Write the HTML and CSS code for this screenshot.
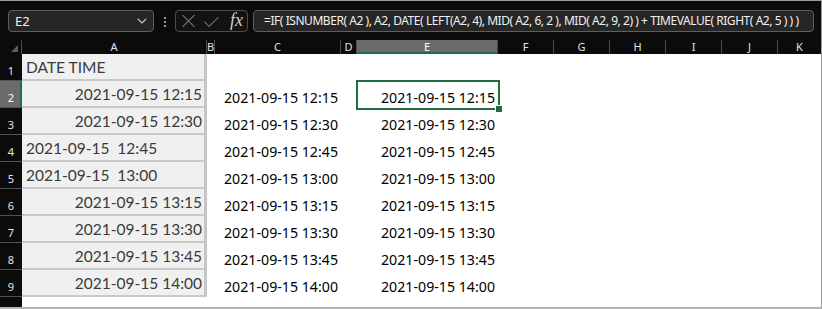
FILE: index.html
```html
<!DOCTYPE html>
<html>
	<head>
		<meta charset="UTF-8">
		<title>Sheet</title>
		<link rel="stylesheet" href="styles.css">
	</head>
	<body>
		<div class="app">
			<!--编辑栏-->
			<div class="bar">
				<div class="namebox">
					<span>E2</span>
					<svg width="10" height="6" viewBox="0 0 10 6"><path d="M0.8 0.8 L5 5 L9.2 0.8" fill="none" stroke="#d0d0d0" stroke-width="1.2"/></svg>
				</div>
				<div class="grip"><i></i><i></i><i></i></div>
				<div class="fxbox">
					<svg width="13" height="12" viewBox="0 0 13 12"><path d="M0.5 0 L12.5 12 M12.5 0 L0.5 12" fill="none" stroke="#6e6e6e" stroke-width="1.1"/></svg>
					<svg class="ok" width="15" height="10" viewBox="0 0 15 10"><path d="M0.4 4.6 L5 9.4 L14.6 0.2" fill="none" stroke="#6e6e6e" stroke-width="1.1"/></svg>
					<span class="fx">fx</span>
				</div>
				<div class="formula">=IF( ISNUMBER( A2 ), A2, DATE( LEFT(A2, 4), MID( A2, 6, 2 ), MID( A2, 9, 2) ) + TIMEVALUE( RIGHT( A2, 5 ) ) )</div>
			</div>
			<!--表格区-->
			<div class="sheet">
				<div class="row head">
					<div class="ch corner"><span class="tri"></span></div>
					<div class="ch">A</div>
					<div class="ch">B</div>
					<div class="ch">C</div>
					<div class="ch">D</div>
					<div class="ch sel">E</div>
					<div class="ch">F</div>
					<div class="ch">G</div>
					<div class="ch">H</div>
					<div class="ch">I</div>
					<div class="ch">J</div>
					<div class="ch">K</div>
				</div>
				<div class="row">
					<div class="rh">1</div>
					<div class="a l">DATE TIME</div>
					<div></div><div class="n"></div><div></div><div class="n"></div><div></div>
				</div>
				<div class="row">
					<div class="rh sel">2</div>
					<div class="a">2021-09-15 12:15</div>
					<div></div><div class="n">2021-09-15 12:15</div><div></div><div class="n cur">2021-09-15 12:15</div><div></div>
				</div>
				<div class="row">
					<div class="rh">3</div>
					<div class="a">2021-09-15 12:30</div>
					<div></div><div class="n">2021-09-15 12:30</div><div></div><div class="n">2021-09-15 12:30</div><div></div>
				</div>
				<div class="row">
					<div class="rh">4</div>
					<div class="a l">2021-09-15  12:45</div>
					<div></div><div class="n">2021-09-15 12:45</div><div></div><div class="n">2021-09-15 12:45</div><div></div>
				</div>
				<div class="row">
					<div class="rh">5</div>
					<div class="a l">2021-09-15  13:00</div>
					<div></div><div class="n">2021-09-15 13:00</div><div></div><div class="n">2021-09-15 13:00</div><div></div>
				</div>
				<div class="row">
					<div class="rh">6</div>
					<div class="a">2021-09-15 13:15</div>
					<div></div><div class="n">2021-09-15 13:15</div><div></div><div class="n">2021-09-15 13:15</div><div></div>
				</div>
				<div class="row">
					<div class="rh">7</div>
					<div class="a">2021-09-15 13:30</div>
					<div></div><div class="n">2021-09-15 13:30</div><div></div><div class="n">2021-09-15 13:30</div><div></div>
				</div>
				<div class="row">
					<div class="rh">8</div>
					<div class="a">2021-09-15 13:45</div>
					<div></div><div class="n">2021-09-15 13:45</div><div></div><div class="n">2021-09-15 13:45</div><div></div>
				</div>
				<div class="row">
					<div class="rh">9</div>
					<div class="a">2021-09-15 14:00</div>
					<div></div><div class="n">2021-09-15 14:00</div><div></div><div class="n">2021-09-15 14:00</div><div></div>
				</div>
				<div class="row">
					<div class="rh">10</div>
				</div>
			</div>
		</div>
	</body>
</html>
```

FILE: styles.css
```css
*{
	margin: 0;
	padding: 0;
	box-sizing: border-box;
}
body{
	width: 822px;
	height: 309px;
	overflow: hidden;
	background: #fff;
}
.app{
	width: 822px;
	height: 309px;
	border-top: 1px solid #9c9c9c;
	border-right: 1px solid #9c9c9c;
	border-bottom: 2px solid #b4b4b4;
	display: flex;
	flex-direction: column;
	overflow: hidden;
}
/* 编辑栏 */
.bar{
	height: 39px;
	flex-shrink: 0;
	background: #0b0b0b;
	display: flex;
	align-items: flex-start;
	padding: 9px 0 0 8px;
}
.namebox{
	width: 146px;
	height: 22px;
	border: 1px solid #5e5e5e;
	border-radius: 4px;
	background: #262626;
	display: flex;
	align-items: center;
	justify-content: space-between;
	padding: 0 6px 0 6px;
	font: 13px "Noto Sans", sans-serif;
	color: #f4f4f4;
}
.grip{
	margin-left: 10px;
	width: 2px;
	display: flex;
	flex-direction: column;
	gap: 2px;
	padding-top: 7px;
}
.grip i{
	display: block;
	width: 2px;
	height: 2px;
	background: #9a9a9a;
}
.fxbox{
	margin-left: 9px;
	width: 73px;
	height: 22px;
	border: 1px solid #4c4c4c;
	border-radius: 4px;
	background: #121212;
	display: flex;
	align-items: center;
	padding-left: 6px;
}
.fxbox .ok{
	margin-left: 9px;
	margin-top: 1px;
}
.fx{
	margin-left: 11px;
	font: italic 18px "Liberation Serif", serif;
	color: #cfcfcf;
	line-height: 18px;
	margin-top: -2px;
}
.formula{
	margin-left: 5px;
	width: 561px;
	height: 22px;
	border: 1px solid #5e5e5e;
	border-radius: 4px;
	background: #262626;
	padding-left: 10px;
	font: 12px "Noto Sans", sans-serif;
	letter-spacing: -0.45px;
	line-height: 20px;
	color: #f0f0f0;
	white-space: nowrap;
	overflow: hidden;
}
/* 表格 */
.sheet{
	flex: 1;
	overflow: hidden;
}
.row{
	display: grid;
	grid-template-columns: 22px 185px 8px 126px 16px 141px 1fr;
	height: 27px;
}
.row.head{
	height: 14px;
	grid-template-columns: 22px 185px 8px 126px 16px 141px 56px 56px 56px 56px 56px 1fr;
	background: #0b0b0b;
}
.ch{
	border-right: 1px solid #4a4a4a;
	color: #e2e2e2;
	font: 11px "Noto Sans", sans-serif;
	line-height: 14px;
	text-align: center;
}
.ch:last-child{
	border-right: none;
}
.ch.sel{
	background: #6b6b6b;
	box-shadow: inset 0 -2px 0 #1e7145;
	color: #fff;
}
.corner{
	display: flex;
	justify-content: flex-end;
	align-items: flex-end;
	padding: 0 3px 2px 0;
}
.tri{
	width: 7px;
	height: 7px;
	background: #5c5c5c;
	clip-path: polygon(100% 0, 100% 100%, 0 100%);
}
.rh{
	background: #0b0b0b;
	border-bottom: 1px solid #525252;
	color: #e6e6e6;
	font: 11px "Noto Sans", sans-serif;
	line-height: 1;
	display: flex;
	align-items: flex-end;
	justify-content: center;
	padding-bottom: 4px;
}
.rh.sel{
	background: #6b6b6b;
	box-shadow: inset -2px 0 0 #1e7145;
	color: #fff;
}
.a{
	background: #f0f0f0;
	border-right: 3px solid #c6c6c6;
	border-bottom: 2px solid #c9c9c9;
	font: 15.5px Lato, sans-serif;
	line-height: 1;
	color: #3a3a3a;
	white-space: pre;
	display: flex;
	align-items: flex-end;
	justify-content: flex-end;
	padding: 0 2px 4px 4px;
}
.a.l{
	justify-content: flex-start;
}
.n{
	font: 14.2px "Noto Sans", sans-serif;
	line-height: 1;
	color: #000;
	display: flex;
	align-items: flex-end;
	justify-content: flex-end;
	padding: 0 3px 3px 0;
}
.cur{
	position: relative;
}
.cur::after{
	content: "";
	position: absolute;
	left: -1px;
	top: -1px;
	right: -2px;
	bottom: -2px;
	border: 2px solid #1e6e42;
}
.cur::before{
	content: "";
	position: absolute;
	right: -4px;
	bottom: -4px;
	width: 6px;
	height: 6px;
	background: #1e6e42;
	border-left: 1px solid #fff;
	border-top: 1px solid #fff;
	z-index: 1;
}
```
